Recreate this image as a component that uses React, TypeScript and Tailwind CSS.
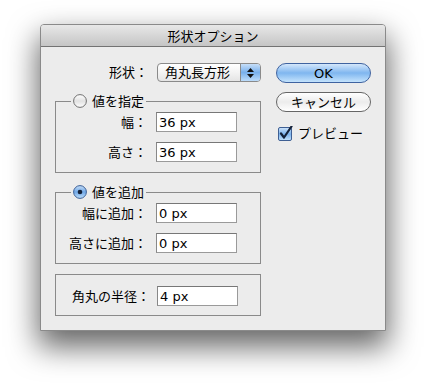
import React from "react";

function Radio({ on }: { on?: boolean }) {
  return (
    <svg width="14" height="14" viewBox="0 0 14 14" className="block shrink-0">
      <defs>
        <linearGradient id={on ? "rOn" : "rOff"} x1="0" y1="0" x2="0" y2="1">
          {on ? (
            <>
              <stop offset="0" stopColor="#c9e0f8" />
              <stop offset="0.5" stopColor="#6fa7e6" />
              <stop offset="1" stopColor="#bfe0fb" />
            </>
          ) : (
            <>
              <stop offset="0" stopColor="#ffffff" />
              <stop offset="0.5" stopColor="#e2e2e2" />
              <stop offset="1" stopColor="#ffffff" />
            </>
          )}
        </linearGradient>
      </defs>
      <circle cx="7" cy="7" r="6.4" fill={`url(#${on ? "rOn" : "rOff"})`} stroke={on ? "#3c5f95" : "#6f6f6f"} strokeWidth="1" />
      {on && <circle cx="7" cy="7" r="2.3" fill="#14223a" />}
    </svg>
  );
}

function Field({ value }: { value: string }) {
  return (
    <div className="w-[81px] h-[20px] bg-white border border-[#9a9a9a] border-t-[#777] border-l-[#888] pl-[2px] flex items-center text-[13px] leading-none">
      {value}
    </div>
  );
}

function Row({ label, value }: { label: string; value: string }) {
  return (
    <div className="flex items-center">
      <div className="w-[91px] text-right leading-none whitespace-nowrap">{label}</div>
      <div className="ml-[9px]">
        <Field value={value} />
      </div>
    </div>
  );
}

function Group({ on, title, rows }: { on?: boolean; title: string; rows: [string, string][] }) {
  return (
    <fieldset className="border border-[#8a8a8a] pb-[10px]">
      <legend className="ml-[15px] px-[2px] h-[16px] flex items-center gap-[5px] leading-none">
        <Radio on={on} />
        <span>{title}</span>
      </legend>
      <div className="mt-[3px] flex flex-col gap-[10px]">
        {rows.map(([l, v]) => (
          <Row key={l} label={l} value={v} />
        ))}
      </div>
    </fieldset>
  );
}

export default function App() {
  return (
    <div className="w-[426px] h-[386px] bg-white pt-[24px] pl-[40px] text-[13px] text-black font-['DejaVu_Sans','Noto_Sans_CJK_JP',sans-serif]">
      <div className="w-[346px] h-[307px] rounded-t-[4px] border border-[#8a8a8a] bg-[#ececec] shadow-[0_14px_30px_2px_rgba(0,0,0,0.6)] flex flex-col overflow-hidden">
        <div className="h-[22px] shrink-0 border-b border-[#737373] bg-gradient-to-b from-[#e8e8e8] to-[#c5c5c5] flex items-center justify-center pt-[2px] leading-none">
          形状オプション
        </div>
        <div className="flex flex-1 pl-[14px] pr-[14px] pt-[16px]">
          <div className="w-[206px] flex flex-col">
            <div className="flex items-center justify-end">
              <span className="leading-none">形状：</span>
              <div className="ml-[9px] w-[104px] h-[19px] rounded-[4px] border border-[#8a8a8a] bg-gradient-to-b from-white via-[#f3f3f3] to-[#e4e4e4] flex items-stretch overflow-hidden">
                <div className="flex-1 pl-[7px] flex items-center leading-none">角丸長方形</div>
                <div className="w-[20px] border-l border-[#8a8a8a] bg-gradient-to-b from-[#c6def8] via-[#78b0ec] to-[#bcdcfa] flex flex-col items-center justify-center gap-[2px]">
                  <svg width="7" height="4" viewBox="0 0 7 4"><path d="M3.5 0 L7 4 L0 4 Z" fill="#111" /></svg>
                  <svg width="7" height="4" viewBox="0 0 7 4"><path d="M0 0 L7 0 L3.5 4 Z" fill="#111" /></svg>
                </div>
              </div>
            </div>
            <div className="mt-[11px]">
              <Group title="値を指定" rows={[["幅：", "36 px"], ["高さ：", "36 px"]]} />
            </div>
            <div className="mt-[11px]">
              <Group on title="値を追加" rows={[["幅に追加：", "0 px"], ["高さに追加：", "0 px"]]} />
            </div>
            <div className="mt-[10px] border border-[#8a8a8a] pt-[11px] pb-[9px]">
              <div className="flex items-center">
                <div className="w-[94px] text-right leading-none whitespace-nowrap">角丸の半径：</div>
                <div className="ml-[7px]">
                  <Field value="4 px" />
                </div>
              </div>
            </div>
          </div>
          <div className="ml-[15px] w-[95px] flex flex-col">
            <div className="h-[20px] rounded-full border border-[#3f63a0] bg-gradient-to-b from-[#d4e7fb] via-[#7fb6ef] to-[#c4e3fc] flex items-center justify-center leading-none">
              OK
            </div>
            <div className="mt-[9px] h-[20px] rounded-full border border-[#666] bg-gradient-to-b from-white via-[#ececec] to-white flex items-center justify-center leading-none">
              キャンセル
            </div>
            <div className="mt-[14px] flex items-center ml-[2px] gap-[4px]">
              <svg width="16" height="15" viewBox="0 0 16 15" className="block shrink-0">
                <defs>
                  <linearGradient id="cb" x1="0" y1="0" x2="0" y2="1">
                    <stop offset="0" stopColor="#cfe4fa" />
                    <stop offset="0.5" stopColor="#7bb2ec" />
                    <stop offset="1" stopColor="#c4e2fb" />
                  </linearGradient>
                </defs>
                <rect x="0.5" y="1.5" width="13" height="13" rx="1.5" fill="url(#cb)" stroke="#3f5f93" />
                <path d="M3 7.5 L6 11.5 L13.5 0.5" fill="none" stroke="#14223a" strokeWidth="2.2" strokeLinecap="round" strokeLinejoin="round" />
              </svg>
              <span className="leading-none">プレビュー</span>
            </div>
          </div>
        </div>
      </div>
    </div>
  );
}
